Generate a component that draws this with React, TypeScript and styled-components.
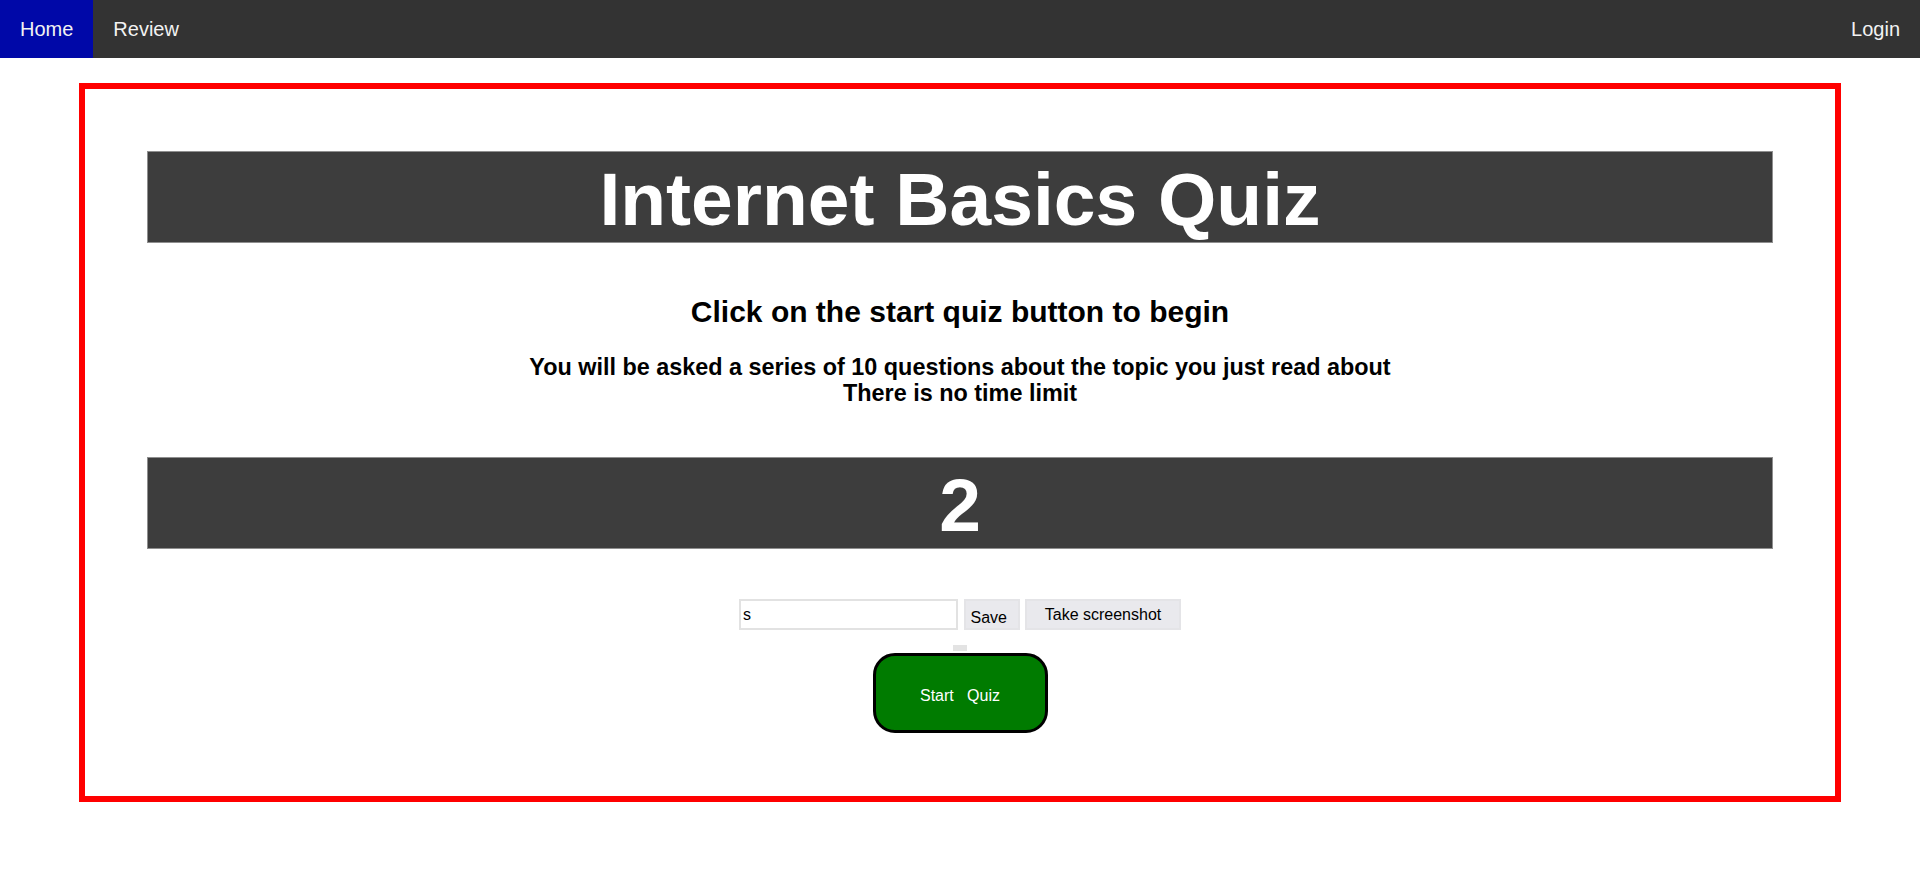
import React from "react";
import styled, { createGlobalStyle } from "styled-components";

const Global = createGlobalStyle`
  html, body {
    margin: 0;
    padding: 0;
    background: #ffffff;
    font-family: "Liberation Sans", Arial, sans-serif;
  }
  * { box-sizing: border-box; }
`;

const Nav = styled.nav`
  display: flex;
  align-items: stretch;
  height: 58px;
  background: #333333;
`;

const NavLink = styled.a<{ $active?: boolean }>`
  display: block;
  padding: 1px 20px 0;
  line-height: 57px;
  font-size: 20px;
  color: #f2f2f2;
  text-decoration: none;
  background: ${(p) => (p.$active ? "#0008a8" : "transparent")};
`;

const Spacer = styled.div`
  flex: 1;
`;

const Panel = styled.main`
  width: 1762px;
  margin: 25px auto 0;
  border: 6px solid #ff0000;
  padding: 62px 62px 63px;
  display: flex;
  flex-direction: column;
  align-items: stretch;
`;

const Banner = styled.div<{ $mt?: number }>`
  height: 92px;
  margin-top: ${(p) => p.$mt ?? 0}px;
  padding-top: 5px;
  background: #3d3d3d;
  border: 1px solid #8f8f8f;
  color: #ffffff;
  font-weight: bold;
  font-size: 75px;
  line-height: 85px;
  text-align: center;
  overflow: hidden;
`;

const Lead = styled.h2`
  margin: 52px 0 0;
  font-size: 30px;
  font-weight: bold;
  line-height: 34.5px;
  text-align: center;
  color: #000;
`;

const Info = styled.p`
  margin: 24px 0 0;
  font-size: 23.4px;
  font-weight: bold;
  line-height: 26.9px;
  text-align: center;
  color: #000;
`;

const Controls = styled.div`
  margin-top: 50px;
  display: flex;
  justify-content: center;
  align-items: stretch;
  gap: 5.5px;
  height: 31px;
`;

const TextInput = styled.input`
  width: 219px;
  height: 31px;
  border: 2px solid #e2e2e2;
  padding: 0 2px;
  font-family: "Liberation Sans", Arial, sans-serif;
  font-size: 16px;
  color: #000;
  outline: none;
`;

const GrayButton = styled.button<{ $w: number; $shift?: number; $left?: boolean }>`
  width: ${(p) => p.$w}px;
  height: 31px;
  border: 2px solid #e4e4e7;
  background: #e9e9ed;
  color: #000;
  font-family: "Liberation Sans", Arial, sans-serif;
  font-size: 16px;
  line-height: 18px;
  padding: ${(p) => (p.$shift ?? 0)}px 0 0 ${(p) => (p.$left ? 5 : 0)}px;
  text-align: ${(p) => (p.$left ? "left" : "center")};
  cursor: pointer;
`;

const StartArea = styled.div`
  margin-top: 15px;
  display: flex;
  flex-direction: column;
  align-items: center;
`;

const Nub = styled.div`
  width: 14px;
  height: 6px;
  background: #e3e3e3;
  margin-bottom: 2px;
`;

const StartButton = styled.button`
  width: 175px;
  height: 80px;
  border: 3px solid #000;
  border-radius: 22px;
  background: #007b00;
  color: #ffffff;
  font-family: "Liberation Sans", Arial, sans-serif;
  font-size: 16px;
  padding: 6px 0 0;
  white-space: pre;
  cursor: pointer;
`;

export default function App() {
  return (
    <>
      <Global />
      <Nav>
        <NavLink $active href="#">Home</NavLink>
        <NavLink href="#">Review</NavLink>
        <Spacer />
        <NavLink href="#">Login</NavLink>
      </Nav>
      <Panel>
        <Banner>Internet Basics Quiz</Banner>
        <Lead>Click on the start quiz button to begin</Lead>
        <Info>
          You will be asked a series of 10 questions about the topic you just read about
          <br />
          There is no time limit
        </Info>
        <Banner $mt={50}>2</Banner>
        <Controls>
          <TextInput defaultValue="s" />
          <GrayButton $w={56} $shift={7} $left>Save</GrayButton>
          <GrayButton $w={156}>Take screenshot</GrayButton>
        </Controls>
        <StartArea>
          <Nub />
          <StartButton>{"Start   Quiz"}</StartButton>
        </StartArea>
      </Panel>
    </>
  );
}
